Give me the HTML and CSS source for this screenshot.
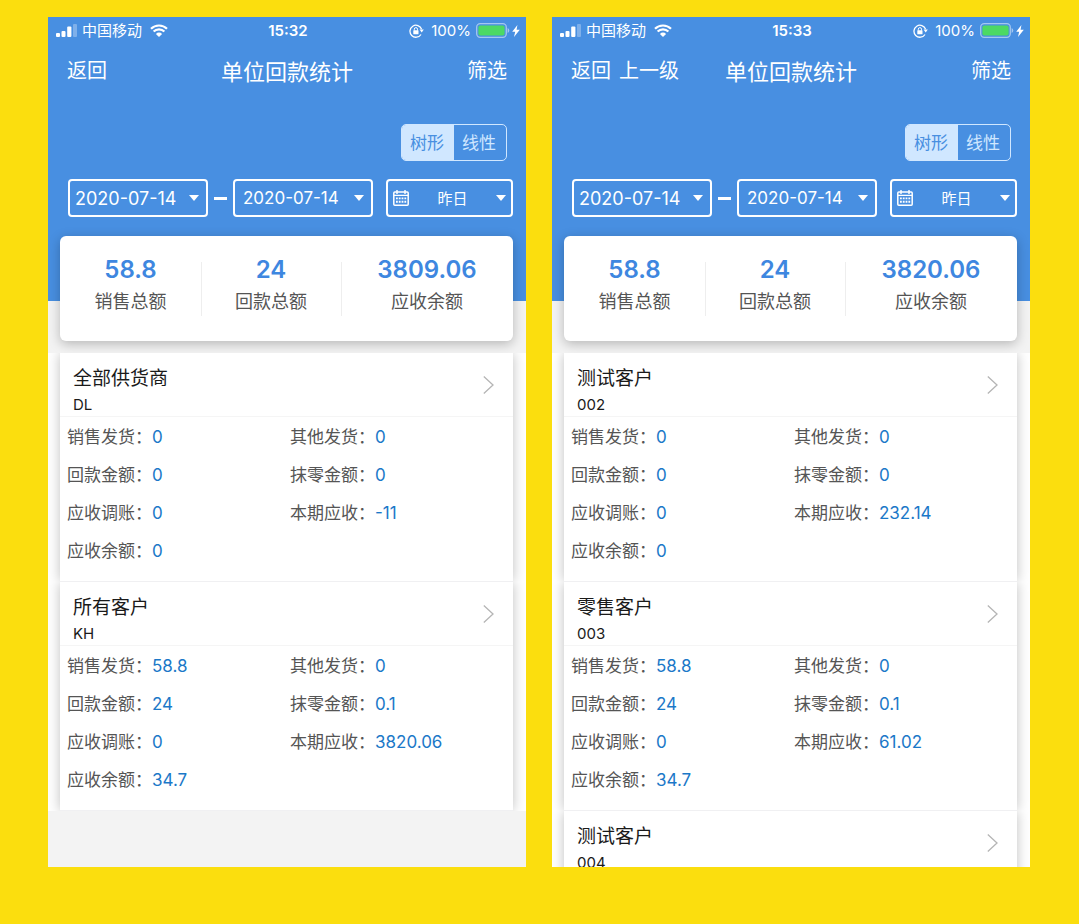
FILE: index.html
```html
<!DOCTYPE html>
<html lang="zh-CN">
<head>
  <meta charset="UTF-8">
  <meta name="viewport" content="width=device-width, initial-scale=1">
  <title>单位回款统计</title>
  <link rel="stylesheet" href="styles.css">
</head>
<body>

  <!-- ICONS -->
  <svg class="sprite" aria-hidden="true">
    <symbol id="signal" viewBox="0 0 22 13">
      <rect x="0" y="9" width="4" height="4" rx="1"/>
      <rect x="5.5" y="7" width="4" height="6" rx="1"/>
      <rect x="11.2" y="2.5" width="4.2" height="10.5" rx="1"/>
      <rect x="17" y="0" width="4" height="13" rx="1" opacity=".3"/>
    </symbol>
    <symbol id="wifi" viewBox="0 0 18 13">
      <path d="M9 13 5.9 9.9a4.4 4.4 0 0 1 6.2 0z"/>
      <path d="M3.6 7.6a7.6 7.6 0 0 1 10.8 0M1 4.8a11.4 11.4 0 0 1 16 0" fill="none" stroke="currentColor" stroke-width="2.2"/>
    </symbol>
    <symbol id="lock" viewBox="0 0 15 14">
      <path d="M12.6 5.2A6 6 0 1 0 12 10.5" fill="none" stroke="currentColor" stroke-width="1.3"/>
      <path d="M10.6 5.6h4.2l-2.1 2.9z"/>
      <rect x="4.3" y="6.2" width="5.2" height="4" rx=".5"/>
      <path d="M5.3 6.5V5.2a1.6 1.6 0 0 1 3.2 0v1.3" fill="none" stroke="currentColor"/>
    </symbol>
    <symbol id="battery" viewBox="0 0 34 15">
      <rect x=".7" y=".7" width="29.6" height="13.6" rx="3.5" fill="none" stroke="currentColor" stroke-width="1.3" opacity=".5"/>
      <rect x="2.4" y="2.4" width="26.2" height="10.2" rx="2" fill="#4cd964"/>
      <path d="M31.6 5a2.7 2.7 0 0 1 0 5z" opacity=".5"/>
    </symbol>
    <symbol id="bolt" viewBox="0 0 8 12">
      <path d="M5.4 0 .2 6.8h3L2 12l5.8-7.2H4.6z"/>
    </symbol>
    <symbol id="calendar" viewBox="0 0 16 16">
      <rect x=".8" y="2" width="14.4" height="13.2" rx="1" fill="none" stroke="currentColor" stroke-width="1.5"/>
      <path d="M1 5.4h14M4 0v4M12 0v4" stroke="currentColor" stroke-width="1.4"/>
      <path d="M3 8.4h10.2M3 11.8h10.2" stroke="currentColor" stroke-width="1.9" stroke-dasharray="1.8 1"/>
    </symbol>
    <symbol id="caret" viewBox="0 0 10 6">
      <path d="M0 0h10L5 6z"/>
    </symbol>
    <symbol id="chevron" viewBox="0 0 11 18">
      <path d="M.8.5 10 9 .8 17.5" fill="none" stroke="currentColor" stroke-width="1.3"/>
    </symbol>
  </svg>

  <main id="screens" class="screens"></main>

  <script>
    const screens = [
      {
        time: "15:32",
        back: ["返回"],
        totals: ["58.8", "24", "3809.06"],
        records: [
          { name: "全部供货商", code: "DL", values: ["0", "0", "0", "0", "0", "-11", "0"] },
          { name: "所有客户", code: "KH", values: ["58.8", "0", "24", "0.1", "0", "3820.06", "34.7"] }
        ]
      },
      {
        time: "15:33",
        back: ["返回", "上一级"],
        totals: ["58.8", "24", "3820.06"],
        records: [
          { name: "测试客户", code: "002", values: ["0", "0", "0", "0", "0", "232.14", "0"] },
          { name: "零售客户", code: "003", values: ["58.8", "0", "24", "0.1", "0", "61.02", "34.7"] },
          { name: "测试客户", code: "004", values: [] }
        ]
      }
    ];

    const totalLabels = ["销售总额", "回款总额", "应收余额"];
    const fieldLabels = ["销售发货", "其他发货", "回款金额", "抹零金额", "应收调账", "本期应收", "应收余额"];

    function icon(name) {
      return `<svg class="icon icon-${name}" aria-hidden="true"><use href="#${name}"/></svg>`;
    }

    function renderRecord(r) {
      return `
        <li class="record">
          <a class="record-head" href="#">
            <span>
              <span class="record-name">${r.name}</span>
              <span class="record-code">${r.code}</span>
            </span>
            ${icon("chevron")}
          </a>
          <dl class="fields">
            ${r.values.map((v, i) => `<div class="field"><dt>${fieldLabels[i]}：</dt><dd>${v}</dd></div>`).join("")}
          </dl>
        </li>`;
    }

    function renderScreen(s) {
      return `
        <section class="screen">
          <header class="hero">
            <div class="status">
              <div class="status-left">${icon("signal")}<span class="carrier">中国移动</span>${icon("wifi")}</div>
              <div class="time">${s.time}</div>
              <div class="status-right">${icon("lock")}<span>100%</span>${icon("battery")}${icon("bolt")}</div>
            </div>
            <nav class="nav">
              <div class="back">${s.back.map(b => `<a href="#">${b}</a>`).join("")}</div>
              <h1>单位回款统计</h1>
              <a class="filter-link" href="#">筛选</a>
            </nav>
            <div class="view-switch">
              <button type="button" class="active">树形</button>
              <button type="button">线性</button>
            </div>
            <div class="filters">
              <div class="picker picker-from">
                <select aria-label="开始日期"><option>2020-07-14</option></select>${icon("caret")}
              </div>
              <span class="dash"></span>
              <div class="picker picker-to">
                <select aria-label="结束日期"><option>2020-07-14</option></select>${icon("caret")}
              </div>
              <div class="picker picker-range">
                ${icon("calendar")}
                <select aria-label="日期范围"><option>昨日</option></select>${icon("caret")}
              </div>
            </div>
          </header>
          <div class="summary">
            ${s.totals.map((t, i) => `<div class="total"><strong>${t}</strong><span>${totalLabels[i]}</span></div>`).join("")}
          </div>
          <ul class="records">${s.records.map(renderRecord).join("")}</ul>
        </section>`;
    }

    document.getElementById("screens").innerHTML = screens.map(renderScreen).join("");
  </script>
</body>
</html>
```
FILE: styles.css
```css
* { box-sizing: border-box; }
body {
  margin: 0;
  background: #fbde0e;
  color: #1a1a1a;
  font-family: Inter, "Noto Sans CJK SC", sans-serif;
}
h1, ul, dl, dd { margin: 0; padding: 0; }
a { color: inherit; text-decoration: none; }
button, select { font: inherit; color: inherit; }
.sprite { position: absolute; width: 0; height: 0; }
.icon { display: block; flex: none; fill: currentColor; }

.screens {
  display: grid;
  grid-template-columns: 1fr 1fr;
  gap: 26px;
  height: 100vh;
  padding: 17px 49px 57px 48px;
}
.screen {
  overflow: hidden;
  background: #f3f3f3;
}

/* header */
.hero {
  height: 284px;
  background: #488fe1;
  color: #fff;
}
.status, .nav {
  display: grid;
  grid-template-columns: 1fr auto 1fr;
  align-items: center;
}
.status {
  height: 27px;
  padding: 0 6px 0 8px;
  font-size: 15px;
}
.status-left, .status-right {
  display: flex;
  align-items: center;
}
.status-left { gap: 4px; }
.carrier { padding-bottom: 2px; }
.status-left .icon-wifi { margin-left: 4px; }
.status-right { justify-content: flex-end; gap: 5px; }
.status-right .icon-lock { margin-right: 2px; }
.status-right .icon-bolt { margin-left: -3px; }
.time { font-weight: 600; }
.icon-signal { width: 22px; height: 13px; }
.icon-wifi { width: 18px; height: 13px; }
.icon-lock { width: 15px; height: 14px; }
.icon-battery { width: 34px; height: 15px; }
.icon-bolt { width: 8px; height: 12px; }

.nav {
  height: 51px;
  padding: 0 19px;
  font-size: 20px;
}
.nav h1 { font-size: 22px; font-weight: 400; }
.back { display: flex; gap: 8px; }
.filter-link { text-align: right; }

.view-switch {
  display: flex;
  width: 106px;
  height: 37px;
  margin: 29px 19px 18px auto;
  border: 1px solid #d0e7ff;
  border-radius: 5px;
  overflow: hidden;
}
.view-switch button {
  flex: 1;
  padding: 0 2px 2px 0;
  border: 0;
  background: none;
  color: #d0e7ff;
  font-size: 17px;
}
.view-switch .active { background: #d0e7ff; color: #488fe1; }

.filters {
  display: grid;
  grid-template-columns: 140fr 25px 140fr 140fr;
  align-items: center;
  padding: 0 13px 0 20px;
}
.picker {
  display: flex;
  align-items: center;
  height: 38px;
  padding: 0 7px 0 5px;
  border: 2px solid #fff;
  border-radius: 4px;
}
.picker select {
  flex: 1;
  min-width: 0;
  padding: 0;
  border: 0;
  appearance: none;
  background: none;
}
.picker-from { font-size: 18px; }
.picker-to { padding-left: 8px; font-size: 17px; }
.picker-range { margin-left: 13px; padding: 0 5px; font-size: 15px; }
.picker-range select { text-align: center; text-align-last: center; }
.dash { width: 13px; height: 3px; margin: 0 6px; background: #fff; }
.icon-caret { width: 10px; height: 6px; }
.icon-calendar { width: 16px; height: 16px; }

/* totals */
.summary {
  position: relative;
  display: grid;
  grid-template-columns: 141fr 140fr 172fr;
  height: 105px;
  margin: -65px 13px 12px 12px;
  padding-top: 18px;
  border-radius: 6px;
  background: #fff;
  box-shadow: 0 3px 12px rgba(0,0,0,0.25);
}
.total {
  position: relative;
  text-align: center;
  color: #555;
  font-size: 18px;
}
.total strong, .total span { display: block; line-height: 32px; }
.total strong { color: #3e87e0; font-size: 24px; font-weight: 600; }
.total + .total::before {
  content: "";
  position: absolute;
  left: 0;
  top: 8px;
  width: 1px;
  height: 54px;
  background: #eee;
}

/* record list */
.records {
  padding: 0 13px 0 12px;
  background: #fff;
  list-style: none;
}
.record {
  min-height: 229px;
  border-bottom: 1px solid #f0f0f2;
  background: #fff;
  box-shadow: 0 0 12px rgba(0,0,0,0.25);
  clip-path: inset(0 -13px);
}
.record-head {
  display: flex;
  align-items: center;
  justify-content: space-between;
  height: 64px;
  padding: 0 19px 0 13px;
  border-bottom: 1px solid #f5f5f5;
}
.record-name, .record-code { display: block; }
.record-name { padding-top: 12px; font-size: 19px; line-height: 28px; }
.record-code { font-size: 15px; line-height: 24px; }
.icon-chevron { width: 11px; height: 18px; color: #b5b5b5; }
.fields {
  display: grid;
  grid-template-columns: 1fr 1fr;
  padding: 1px 0 0 7px;
}
.field {
  display: flex;
  height: 38px;
  line-height: 38px;
  font-size: 17px;
}
.field dt { color: #555; }
.field dd { color: #1b78c8; }
```
